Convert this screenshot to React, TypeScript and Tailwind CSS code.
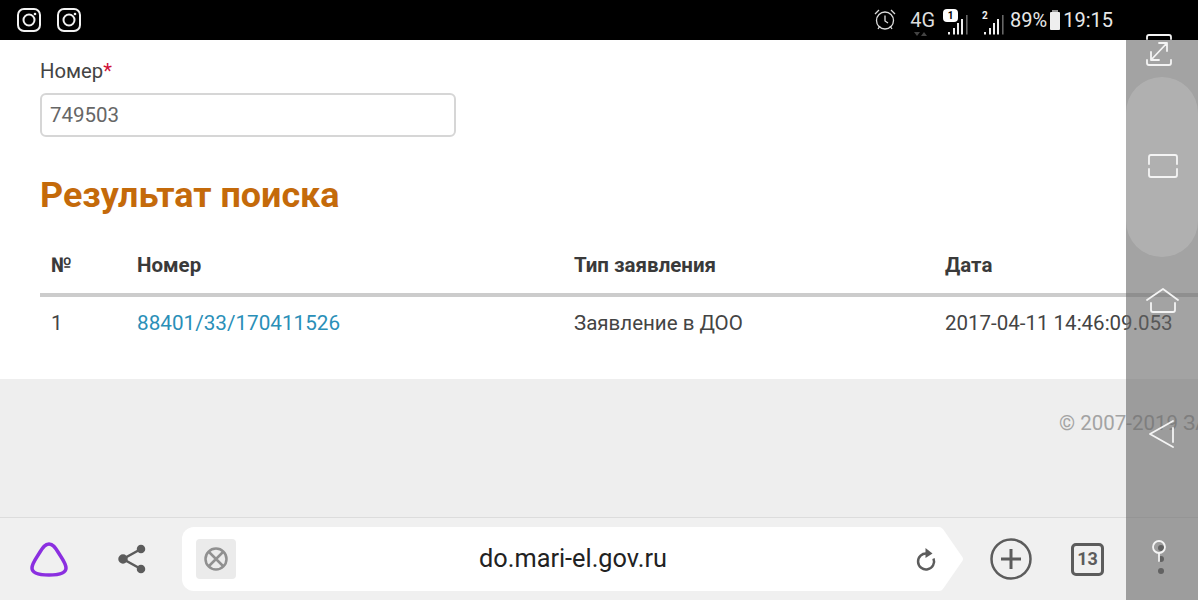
import React from "react";

const InstagramIcon = () => (
  <svg width="24" height="24" viewBox="0 0 24 24" fill="none" stroke="#f2f2f2" strokeWidth="2">
    <rect x="1" y="1" width="22" height="22" rx="6" />
    <circle cx="12" cy="12" r="5.500" />
    <circle cx="18" cy="6" r="1.300" fill="#f2f2f2" stroke="none" />
  </svg>
);

const SignalBars = ({ badge }: { badge: React.ReactNode }) => (
  <div className="relative w-[26px] h-[30px]">
    {badge}
    <svg width="26" height="30" viewBox="0 0 26 30" className="absolute left-0 top-0">
      <rect x="5" y="27" width="2" height="2.5" fill="#eee" />
      <rect x="10" y="23" width="2" height="6.5" fill="#eee" />
      <rect x="14" y="18" width="2" height="11.5" fill="#eee" />
      <rect x="18" y="14" width="2" height="15.5" fill="#eee" />
      <rect x="23" y="10" width="1.6" height="19.5" fill="#666" />
    </svg>
  </div>
);

const StatusBar = () => (
  <div className="h-10 shrink-0 bg-black flex items-center justify-between pl-[17px] pr-[85px] text-[#e8e8e8]">
    <div className="flex items-center gap-4">
      <InstagramIcon />
      <InstagramIcon />
    </div>
    <div className="flex items-center text-[20px] leading-none">
      <svg width="24" height="24" viewBox="0 0 24 24" fill="none" stroke="#ddd" strokeWidth="1.3" className="mr-[13px]">
        <circle cx="12" cy="12.5" r="8.500" />
        <path d="M12 7.500v5.500l3 2M2 6l4-4M22 6l-4-4M5 21l2-3M19 21l-2-3" />
      </svg>
      <div className="relative text-[20px] text-[#ddd] mr-[8px]">
        4G
        <div className="absolute left-1 -bottom-[6px] flex gap-[1px]">
          <div className="w-0 h-0 border-x-[3px] border-x-transparent border-t-[4px] border-t-[#444]" />
          <div className="w-0 h-0 border-x-[3px] border-x-transparent border-b-[4px] border-b-[#444]" />
        </div>
      </div>
      <SignalBars
        badge={
          <div className="absolute left-0 top-[4px] w-[15px] h-[13px] bg-white rounded-[4px] z-10 flex items-center justify-center text-black text-[10px] font-bold">
            1
          </div>
        }
      />
      <div className="w-[10px]" />
      <SignalBars
        badge={
          <div className="absolute left-[3px] top-[6px] text-[#eee] text-[10px] font-bold leading-none">2</div>
        }
      />
      <span className="ml-[5px]">89%</span>
      <div className="ml-[3px] mr-[3px] flex flex-col items-center">
        <div className="w-[6px] h-[2px] bg-[#999]" />
        <div className="w-[10px] h-[18px] bg-[#eee] rounded-[1px]" />
      </div>
      <span>19:15</span>
    </div>
  </div>
);

const SearchResults = () => (
  <div className="h-[339px] shrink-0 bg-white pl-10 pt-[19px]">
    <div className="text-[20.3px] leading-6 text-[#444]">
      Номер<span className="text-[#d0103a]">*</span>
    </div>
    <div className="mt-[10px] w-[416px] h-[44px] border-2 border-[#d6d6d6] rounded-md flex items-center pl-[8px] text-[20.5px] text-[#666]">
      749503
    </div>
    <h2 className="mt-[38px] text-[35.9px] leading-10 font-bold text-[#c46a0a]">Результат поиска</h2>
    <div className="mt-[38px] grid grid-cols-[86px_437px_371px_1fr] pl-[11px] pb-4 border-b-4 border-[#cccccc] text-[20.5px] leading-6 font-bold text-[#3a3a3a]">
      <div>№</div>
      <div>Номер</div>
      <div>Тип заявления</div>
      <div>Дата</div>
    </div>
    <div className="mt-[14px] grid grid-cols-[86px_437px_371px_1fr] pl-[11px] text-[20.5px] leading-6 text-[#444]">
      <div>1</div>
      <div className="text-[#2a8fb8] text-[20.7px]">88401/33/170411526</div>
      <div>Заявление в ДОО</div>
      <div className="whitespace-nowrap">2017-04-11 14:46:09.053</div>
    </div>
  </div>
);

const Footer = () => (
  <div className="flex-1 bg-[#eeeeee] overflow-hidden flex justify-end pt-[33px]">
    <div className="w-[139px] overflow-hidden whitespace-nowrap text-[20.5px] leading-[22px] text-[#a3a3a3]">
      © 2007-2019 ЗАО
    </div>
  </div>
);

const Toolbar = () => (
  <div className="h-[83px] shrink-0 bg-[#f0f0f0] border-t border-[#dcdcdc] flex items-center pl-[29px] text-[#5c5c5c]">
    <svg width="40" height="38" viewBox="0 0 40 38" fill="none" className="shrink-0">
      <path
        d="M20 4c4 0 6 3 9 8 3 5 8 11 8 16 0 6-8 7-17 7s-17-1-17-7c0-5 5-11 8-16 3-5 5-8 9-8z"
        stroke="#8b2fe0"
        strokeWidth="3.500"
      />
    </svg>
    <svg width="30" height="32" viewBox="0 0 30 32" className="ml-[48px] shrink-0" fill="#5c5c5c" stroke="#5c5c5c" strokeWidth="2.500">
      <path d="M24 6L6 16l18 10" fill="none" />
      <circle cx="24" cy="6" r="3" />
      <circle cx="6" cy="16" r="3.500" />
      <circle cx="24" cy="26" r="3" />
    </svg>
    <div className="ml-[35px] flex h-16 shrink-0 -mt-[1px]">
      <div className="w-[755px] bg-white rounded-l-xl flex items-center pl-[14px]">
        <div className="w-10 h-10 bg-[#ebebeb] rounded flex items-center justify-center shrink-0">
          <svg width="24" height="24" viewBox="0 0 24 24" fill="none" stroke="#909090" strokeWidth="2.500">
            <circle cx="12" cy="12" r="10.500" />
            <path d="M4.500 4.500l15 15M19.500 4.500l-15 15" />
          </svg>
        </div>
        <div className="flex-1 text-center text-[25.3px] text-[#222] leading-none pr-[3px]">do.mari-el.gov.ru</div>
        <svg width="24" height="28" viewBox="0 0 24 28" fill="none" stroke="#5c5c5c" strokeWidth="2.500" className="shrink-0">
          <path d="M14 8.500a8 8 0 1 0 6.500 5" />
          <path d="M12.500 3l7 5.500-7 4.500z" fill="#5c5c5c" stroke="none" />
        </svg>
      </div>
      <svg width="28" height="64" viewBox="0 0 28 64" className="shrink-0">
        <path d="M0 0h2q3 0 5 3.500l18 26q2 2.500 0 5l-18 26q-2 3.500-5 3.500H0z" fill="#fff" />
      </svg>
    </div>
    <svg width="42" height="42" viewBox="0 0 42 42" fill="none" stroke="#5c5c5c" className="ml-[25px] shrink-0">
      <circle cx="21" cy="21" r="19.500" strokeWidth="2.500" />
      <path d="M11 21h20M21 11v20" strokeWidth="3" />
    </svg>
    <div className="ml-[39px] w-[33px] h-[33px] shrink-0 border-[3px] border-[#5c5c5c] rounded-[5px] flex items-center justify-center text-[18px] font-bold leading-none">
      13
    </div>
    <div className="ml-[54px] flex flex-col gap-[5.500px] shrink-0">
      <div className="w-[6px] h-[6px] rounded-full bg-[#5c5c5c]" />
      <div className="w-[6px] h-[6px] rounded-full bg-[#5c5c5c]" />
      <div className="w-[6px] h-[6px] rounded-full bg-[#5c5c5c]" />
    </div>
  </div>
);

// floating system nav strip, sits on top of the page
const NavOverlay = () => (
  <>
    <div className="absolute right-0 top-10 bottom-0 w-[72px] bg-[#666666]/60">
      <div className="mt-[37px] h-[180px] rounded-[36px] bg-white/15" />
    </div>
    <div className="absolute right-0 top-0 bottom-0 w-[72px]">
      <svg width="72" height="600" viewBox="0 0 72 600" fill="none" stroke="#f4f4f4" strokeWidth="1.800" strokeLinecap="round" strokeLinejoin="round">
        <path d="M21 39v-2a2 2 0 0 1 2-2h20a2 2 0 0 1 2 2v2M21 60v3a2 2 0 0 0 2 2h20a2 2 0 0 0 2-2v-3M25 60l16-17M33 43h8v8M25 52v8h8" />
        <path d="M23 164v-7a2 2 0 0 1 2-2h24a2 2 0 0 1 2 2v7M23 169v6a2 2 0 0 0 2 2h24a2 2 0 0 0 2-2v-6" />
        <path d="M21 300l16-11 15 11M25 303v7a2 2 0 0 0 2 2h20a2 2 0 0 0 2-2v-7" />
        <path d="M47 421l-23 13 23 13M47 428v14" />
        <circle cx="33" cy="547" r="6" />
        <path d="M33 553v8" />
      </svg>
    </div>
  </>
);

export default function App() {
  return (
    <div className="relative w-[1198px] h-[600px] overflow-hidden flex flex-col font-['Roboto',sans-serif]">
      <StatusBar />
      <SearchResults />
      <Footer />
      <Toolbar />
      <NavOverlay />
    </div>
  );
}
